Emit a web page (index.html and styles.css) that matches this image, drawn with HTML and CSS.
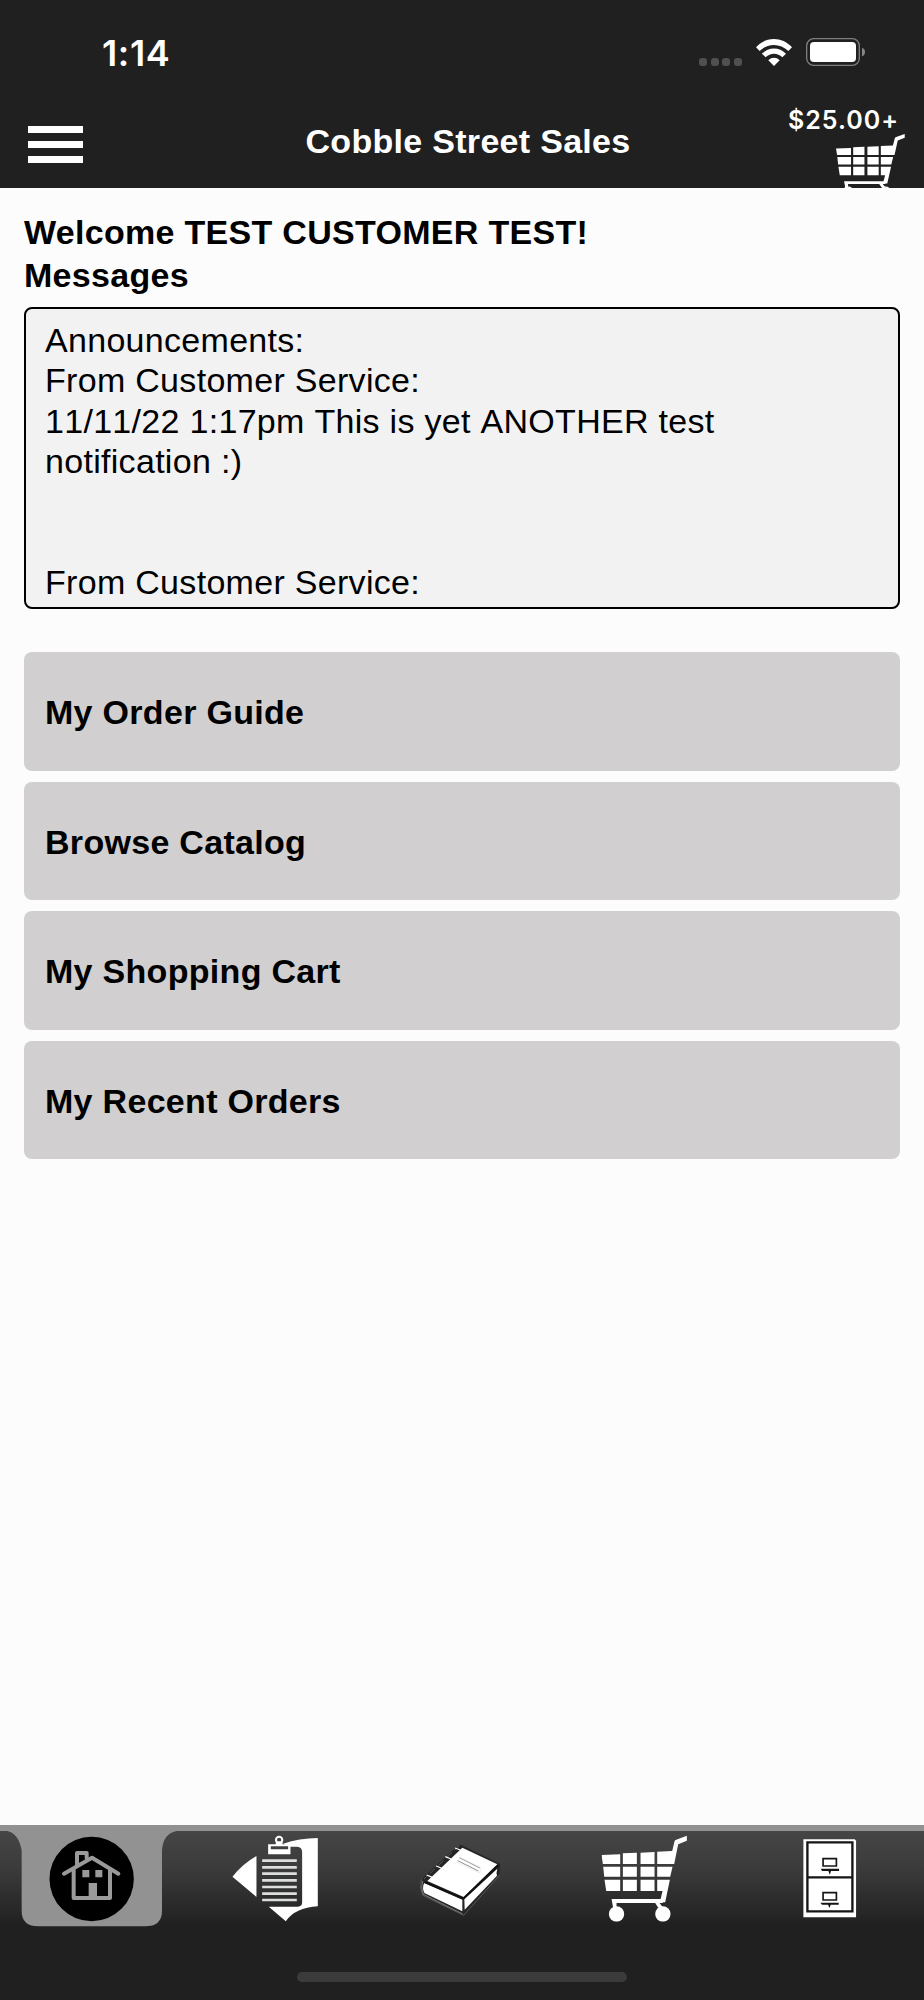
FILE: index.html
```html
<!DOCTYPE html>
<html lang="en">
<head>
<meta charset="utf-8">
<title>Cobble Street Sales</title>
<link rel="stylesheet" href="styles.css">
</head>
<body>
<svg class="defs" width="0" height="0" aria-hidden="true">
  <symbol id="cart" viewBox="34 62 257 258" preserveAspectRatio="none">
    <g fill="#fff">
      <path d="M34 120L90 118V147H38ZM98 115L140 113V147H98ZM151 113L193 111V147H151ZM201 110L246 108L253 79Q254 75 258 74L290 62V77L264 88L252 147H201Z"/>
      <path d="M39 155H90V185H42ZM98 155H140V185H98ZM151 155H193V185H151ZM201 155H247L240 185H201Z"/>
      <path d="M43 194H90V228H48ZM98 194H140V228H98ZM151 194H193V228H151ZM201 194H239L225 262H209L217 228H201Z"/>
      <path d="M64 252H218V264H208L219 278H204L195 264H79V280H69Z"/>
      <circle cx="79" cy="297" r="23"/>
      <circle cx="218" cy="297" r="23"/>
    </g>
  </symbol>
</svg>

<header class="header">
  <div class="status">
    <span class="clock">1:14</span>
    <div class="indicators">
      <div class="dots"><i></i><i></i><i></i><i></i></div>
      <svg class="wifi" width="36" height="28" viewBox="0 0 108 84">
        <path d="M0 25C30-8 78-8 108 25L97 36C73 12 35 12 11 36Z" fill="#fff"/>
        <path d="M18 44C38 23 70 23 90 44L79 55C65 41 43 41 29 55Z" fill="#fff"/>
        <path d="M37 64C47 54 61 54 71 64L54 81Z" fill="#fff"/>
      </svg>
      <svg class="battery" width="59" height="28" viewBox="0 0 177 84">
        <rect x="2" y="2" width="158" height="80" rx="21" fill="none" stroke="#7d7d7d" stroke-width="4"/>
        <rect x="12" y="12" width="138" height="60" rx="12" fill="#fff"/>
        <path d="M168 29Q177 32 177 42T168 55Z" fill="#858585"/>
      </svg>
    </div>
  </div>
  <div class="navbar">
    <div class="menu"><i></i><i></i><i></i></div>
    <h1 class="title">Cobble Street Sales</h1>
    <div class="cart-summary">
      <span class="total">$25.00+</span>
      <svg class="cart-icon" width="69" height="64"><use href="#cart" width="69" height="64"/></svg>
    </div>
  </div>
</header>

<main class="content">
  <h2 class="heading"><span class="welcome">Welcome TEST CUSTOMER TEST!</span><br><span class="label">Messages</span></h2>
  <div class="messages">Announcements:<br>From Customer Service:<br>11/11/22 1:17pm This is yet ANOTHER test notification :)<br><br><br>From Customer Service:</div>
  <nav class="links">
    <a class="link">My Order Guide</a>
    <a class="link">Browse Catalog</a>
    <a class="link">My Shopping Cart</a>
    <a class="link">My Recent Orders</a>
  </nav>
</main>

<footer class="footer">
  <div class="tabs">
    <svg class="tab-home" viewBox="0 63 554.4 300">
      <path d="M10 62Q54 62 65 121V303Q65 349 116 349H435Q486 349 486 303V121Q490 62 545 62Z" fill="#929292"/>
      <circle cx="275" cy="207" r="126.500" fill="#000"/>
      <g fill="none" stroke="#9a9a9a" stroke-width="12" stroke-linecap="round" stroke-linejoin="round">
        <path d="M192 191L276 143L355 191"/>
        <path d="M221 180V264H330V180"/>
        <path d="M231 164V129H260V144"/>
      </g>
      <path d="M247 180H268V202H247ZM286 180H307V202H286ZM266 219H291V266H266Z" fill="#9a9a9a"/>
    </svg>
    <svg class="tab-icon" viewBox="6.600 51 330 300">
      <path d="M38 185Q69 146 110 123V246Z" fill="#fff"/>
      <path d="M190 86Q238 70 294 69V274Q226 278 198 319L147 275H234Q247 275 247 262V111Q247 96 232 95H210Z" fill="#fff"/>
      <circle cx="178" cy="75" r="9.500" fill="none" stroke="#fff" stroke-width="6"/>
      <path d="M145 88H168V79H188V88H212V118H145ZM153 94V103H205V94Z" fill="#fff" fill-rule="evenodd"/>
      <path d="M127 137H231M127 157H231M127 176H231M127 196H231M127 216H231M127 236H231M127 255H231" stroke="#dcdedd" stroke-width="8"/>
    </svg>
    <svg class="tab-icon" viewBox="21 51 330 300">
      <path d="M179 88L301 147L298 180L193 300L66 240L59 211L72 185Z" fill="#252525"/>
      <path d="M187 98L292 148L191 246L82 198Z" fill="#fff"/>
      <path d="M73 204L187 254V289L73 234Q65 217 73 204Z" fill="#fff"/>
      <path d="M193 253L292 161Q288 173 291 182L194 284Z" fill="#fff"/>
      <path d="M68 198Q61 218 70 238L188 297" fill="none" stroke="#aaa" stroke-width="2"/>
      <path d="M64 194Q57 219 68 241L191 301L299 180" fill="none" stroke="#727272" stroke-width="2"/>
      <path d="M74 201L190 251L295 151" fill="none" stroke="#111" stroke-width="6"/>
      <path d="M180 90L72 192" fill="none" stroke="#777" stroke-width="2" stroke-dasharray="22 12"/>
      <path d="M165 99L181 105M136 125L153 132M108 153L124 159M80 180L97 187" fill="none" stroke="#fff" stroke-width="4"/>
      <path d="M178 128L240 159M173 137L235 168" stroke="#555" stroke-width="2"/>
      <path d="M181 128L244 159L239 174L168 141Z" fill="none" stroke="#ddd" stroke-width="1.500"/>
    </svg>
    <svg class="tab-icon" viewBox="5.400 51 330 300">
      <use href="#cart" x="34" y="62" width="257" height="258"/>
    </svg>
    <svg class="tab-icon" viewBox="-40.200 51 330 300">
      <path d="M39 73H193L197 77V307H39Z" fill="#fff"/>
      <path d="M51 82H186V289H51ZM51 187H186" fill="none" stroke="#151515" stroke-width="7"/>
      <path d="M98 131H138V153H98ZM98 233H138V255H98Z" fill="none" stroke="#151515" stroke-width="5"/>
      <path d="M91 161H146V168H122L118 179L114 168H95ZM90 263H145V269H121L117 279L113 269H95Z" fill="#151515"/>
    </svg>
  </div>
  <div class="home-indicator"></div>
</footer>
</body>
</html>
```

FILE: styles.css
```css
* { box-sizing: border-box; }

body {
  margin: 0;
  width: 924px;
  height: 2000px;
  overflow: hidden;
  display: flex;
  flex-direction: column;
  background: #fcfcfc;
  color: #000;
  font-family: "Liberation Sans", Arial, sans-serif;
  font-size: 34px;
  letter-spacing: 0.300px;
}

.defs { position: absolute; }
svg { display: block; }

.header {
  flex: none;
  height: 188px;
  overflow: hidden;
  background: #202020;
  color: #fff;
}

.status {
  height: 100px;
  padding: 38px 59px 0 102px;
  display: flex;
  justify-content: space-between;
}

.clock {
  font: 600 36px/30px Inter, sans-serif;
  letter-spacing: 0.600px;
}

.indicators {
  display: flex;
  align-items: flex-start;
}

.dots {
  display: flex;
  gap: 3.600px;
  padding-top: 20px;
  margin-right: 14px;
}

.dots i {
  width: 8px;
  height: 8px;
  border-radius: 3px;
  background: #505050;
}

.wifi { margin: 1px 14px 0 0; }

.navbar {
  display: grid;
  grid-template-columns: 180px 1fr 177px;
  padding: 0 19px 0 28px;
}

.menu {
  display: flex;
  flex-direction: column;
  gap: 8px;
  padding-top: 26px;
}

.menu i {
  width: 55px;
  height: 7px;
  background: #fff;
}

.title {
  margin: 0;
  padding-top: 21px;
  font-size: 34px;
  line-height: 40px;
  text-align: center;
  white-space: nowrap;
}

.cart-summary {
  display: flex;
  flex-direction: column;
  align-items: flex-end;
}

.total {
  margin: 6px 6px 0 0;
  font: 600 25px/28px Inter, sans-serif;
  letter-spacing: 1px;
}

.cart-icon { flex: none; }

.content {
  flex: 1;
  padding: 23px 24px 0;
}

.heading {
  margin: 0;
  font-size: 34px;
  line-height: 43.200px;
}

.messages {
  height: 302px;
  margin-top: 9.600px;
  padding: 11px 20px 0 19px;
  overflow: hidden;
  border: 2px solid #000;
  border-radius: 8px;
  background: #f2f2f2;
  line-height: 40.250px;
  font-kerning: none;
}

.links {
  margin-top: 43px;
  display: flex;
  flex-direction: column;
  gap: 11px;
}

.link {
  height: 118.600px;
  padding: 3px 0 0 21px;
  display: flex;
  align-items: center;
  border-radius: 8px;
  background: #d1cfd0;
  font-weight: 700;
}

.footer {
  flex: none;
  height: 175px;
  border-top: 6px solid #919191;
  background: linear-gradient(#454545 0, #3c3c3c 35px, #202020 95px);
}

.tabs {
  height: 141px;
  display: grid;
  grid-template-columns: repeat(5, 1fr);
  justify-items: center;
  align-items: start;
}

.tab-home {
  width: 184.800px;
  height: 100px;
}

.tab-icon {
  width: 110px;
  height: 100px;
  margin-top: 1px;
}

.home-indicator {
  width: 330px;
  height: 10px;
  margin: 0 auto;
  border-radius: 5px;
  background: #3b3b3b;
}
```
